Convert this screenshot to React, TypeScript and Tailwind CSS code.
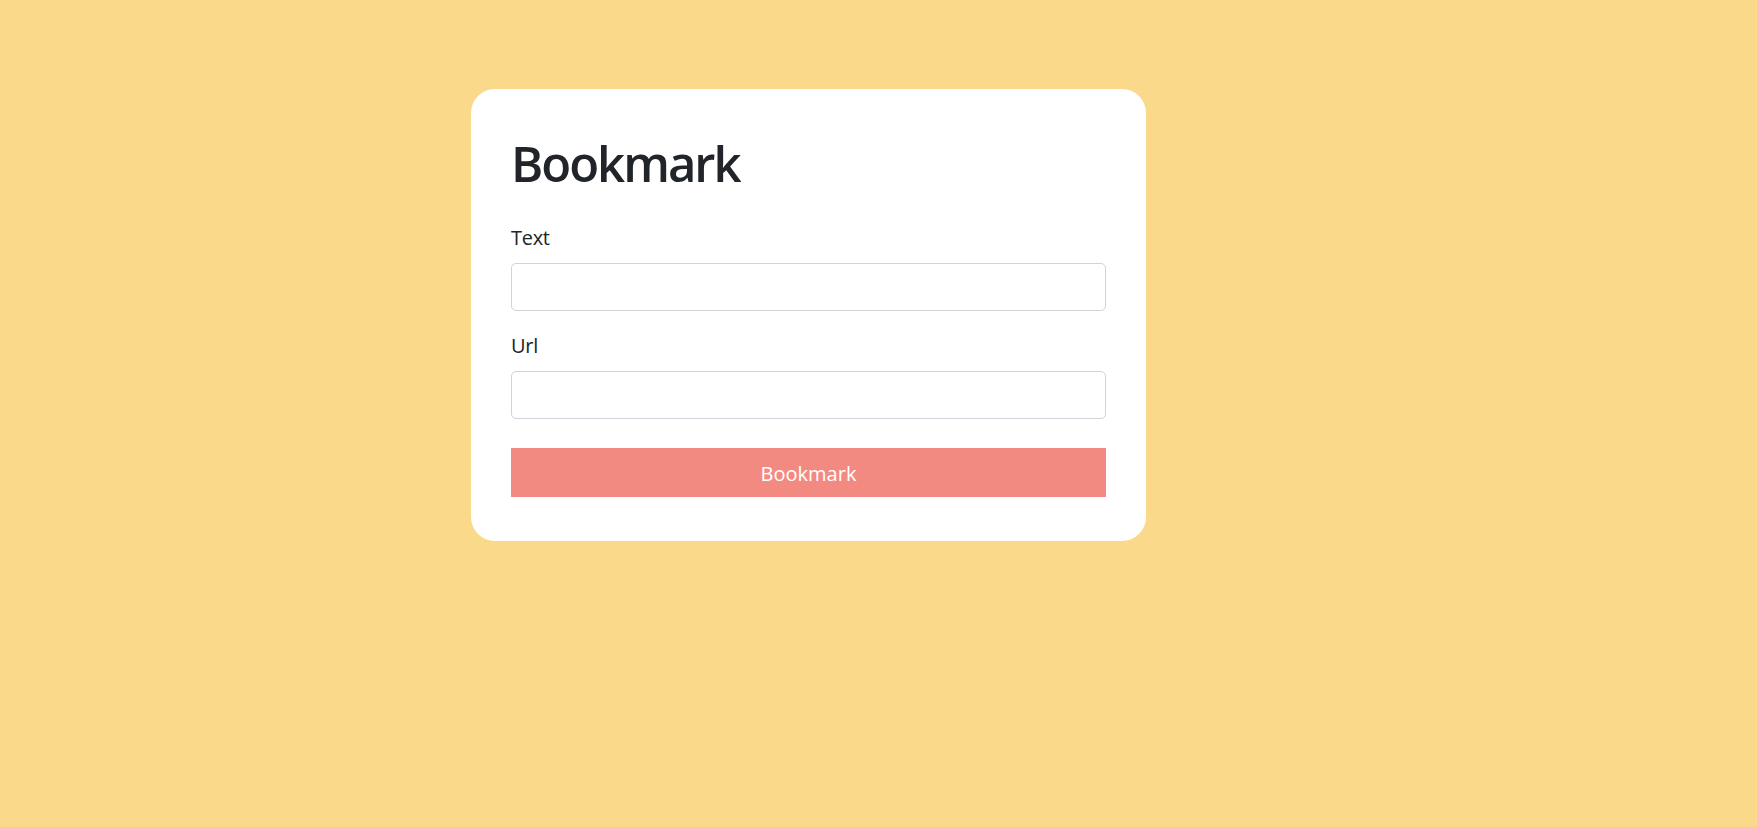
export default function App() {
  return (
    <div
      className="min-h-screen w-full bg-[#fbd98b] pl-[471px] pt-[89px] text-[#212529]"
      style={{ fontFamily: '"Open Sans", "Noto Sans", sans-serif' }}
    >
      <div className="w-[675px] rounded-3xl bg-white px-[40px] pt-[44px] pb-[44px]">
        <h1 className="mb-[30px] text-[49px] font-semibold leading-[60px] tracking-[-2px]">Bookmark</h1>
        <form onSubmit={(e) => e.preventDefault()}>
          <label className="mb-[10px] block text-[20px] leading-[30px] tracking-[-0.3px]">Text</label>
          <input
            type="text"
            className="mb-[20px] block h-[48px] w-full rounded-[5px] border border-[#ced4da] px-3 text-[20px] outline-none"
          />
          <label className="mb-[10px] block text-[20px] leading-[30px] tracking-[-0.3px]">Url</label>
          <input
            type="text"
            className="block h-[48px] w-full rounded-[5px] border border-[#ced4da] px-3 text-[20px] outline-none"
          />
          <button
            type="submit"
            className="mt-[29px] block h-[49px] w-full bg-[#f38a82] pt-[2px] text-[20px] text-white"
          >
            Bookmark
          </button>
        </form>
      </div>
    </div>
  )
}
